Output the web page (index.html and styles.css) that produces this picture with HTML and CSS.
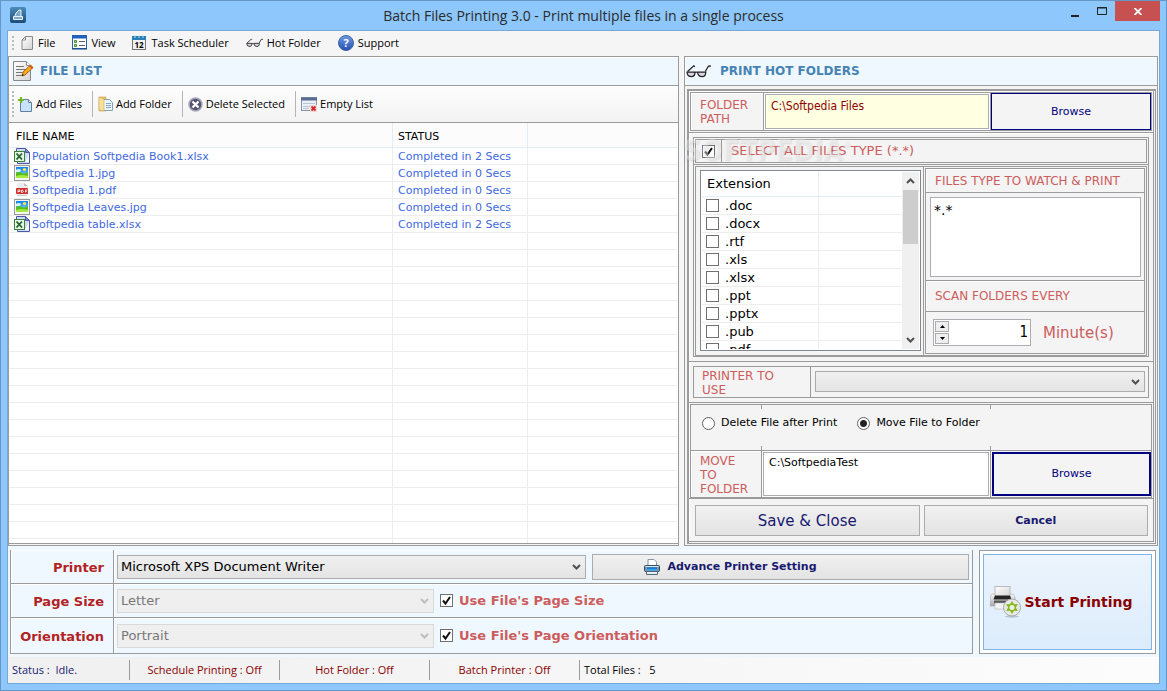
FILE: index.html
```
<!DOCTYPE html>
<html lang="en">
<head>
<meta charset="utf-8">
<title>Batch Files Printing 3.0</title>
<link rel="stylesheet" href="styles.css">
</head>
<body>
<svg class="defs" aria-hidden="true">
  <defs>
    <linearGradient id="sheet" x1="0" y1="0" x2="1" y2="1"><stop offset="0" stop-color="#fff"/><stop offset="1" stop-color="#d4d4d4"/></linearGradient>
    <linearGradient id="blue" x1="0" y1="0" x2="0" y2="1"><stop offset="0" stop-color="#6f9be6"/><stop offset="1" stop-color="#2450b0"/></linearGradient>
    <linearGradient id="app" x1="0" y1="0" x2="0" y2="1"><stop offset="0" stop-color="#4a8dbd"/><stop offset="1" stop-color="#1d4c78"/></linearGradient>
    <linearGradient id="sky" x1="0" y1="0" x2="0" y2="1"><stop offset="0" stop-color="#1582e8"/><stop offset="1" stop-color="#8ddcff"/></linearGradient>
    <linearGradient id="grey" x1="0" y1="0" x2="0" y2="1"><stop offset="0" stop-color="#fafafa"/><stop offset="1" stop-color="#a8a8a8"/></linearGradient>
    <symbol id="xls" viewBox="0 0 16 16">
      <path d="M2.500 3V.5h9l4 4v11h-12V14" fill="#cfdcf8" stroke="#5256a8"/><path d="M11.500 .5v4h4z" fill="#7f8ddb" stroke="#5256a8"/>
      <path d="M11 14h4V6z" fill="#f4f8ff"/><rect x=".5" y="3.500" width="10" height="10" fill="#e9f5e6" stroke="#398236"/>
      <path d="M2.500 5.500l5.500 6M8 5.500l-5.500 6" stroke="#1d6427" stroke-width="1.800"/>
    </symbol>
    <symbol id="jpg" viewBox="0 0 16 16">
      <rect x=".5" y=".5" width="15" height="15" fill="#f6f6f6" stroke="#999"/><rect x="2" y="2" width="12" height="11" fill="url(#sky)"/>
      <path d="M2 5q3-2 5 0l-1 2H2z" fill="#d6f2ff"/><circle cx="10.500" cy="4.500" r="1.600" fill="#ffe94c"/><path d="M2 8q4-2 6 0t6-1v6H2z" fill="#57bd19"/><path d="M2 11q6-2 12 0v2H2z" fill="#a5ea3e"/>
    </symbol>
    <symbol id="pdf" viewBox="0 0 16 16">
      <path d="M3 1h7l4 3v9H3z" fill="#ececec"/><path d="M10 1v3h4z" fill="#bdbdbd"/><rect x="2" y="6" width="12" height="6" rx="1" fill="#d22b28"/>
      <path d="M4 10.500V8h2v1.500H4M7.500 8v2.500q2 0 2-1.200T7.500 8M11.500 10.500V8h2M11.500 9.300h1.500" fill="none" stroke="#fff" stroke-width=".8"/><path d="M3 13.500h10" stroke="#c9c9c9"/>
    </symbol>
    <symbol id="glasses" viewBox="0 0 24 14">
      <path d="M1.500 7l6-5.500 1 1M18.500 7l3-5 1.500-.5.500 1" fill="none" stroke="#222" stroke-width="1.200"/>
      <path d="M1 7.500h7.500q.5 4-3 4.500Q1 12 1 7.500zM11 7.500h8q0 4.500-3.500 4.500-4 0-4.500-4.500z" fill="#dcd4e6" stroke="#222" stroke-width="1.200"/><path d="M8.500 8q1-1 2.500 0" fill="none" stroke="#222"/>
    </symbol>
  </defs>
</svg>

<header class="titlebar">
  <svg class="app-icon" viewBox="0 0 16 16"><rect width="16" height="16" rx="2" fill="url(#app)"/><path d="M5 9l1-3 3-3h2v6M3.500 9.500h9v3h-9z" fill="#7fa9ca" stroke="#e8f1f8"/></svg>
  <h1>Batch Files Printing 3.0 - Print multiple files in a single process</h1>
  <div class="controls">
    <button aria-label="Minimize"><svg width="8" height="12"><path d="M0 11h8" stroke="#222" stroke-width="2"/></svg></button>
    <button aria-label="Maximize"><svg width="10" height="8"><path d="M.5.5h9v7h-9zM0 1h10" fill="none" stroke="#222"/></svg></button>
    <button class="close" aria-label="Close"><svg width="8" height="7"><path d="M.5 0l7 7m0-7l-7 7" stroke="#fff" stroke-width="1.800"/></svg></button>
  </div>
</header>

<main class="client">
  <nav class="menubar">
    <span class="grip"></span>
    <button><svg width="13" height="16"><path d="M4.500 1.500h7v13H1V5z" fill="url(#sheet)" stroke="#888"/><path d="M1 5h3.500V1.500" fill="none" stroke="#888"/></svg>File</button>
    <button><svg width="15" height="15"><rect x=".5" y=".5" width="14" height="13" fill="#fff" stroke="#2465ad"/><path d="M0 2h15" stroke="#1c61bd" stroke-width="3"/><path d="M0 14h15" stroke="#143e80"/><path d="M2.500 5.500h2v2h-2zM2.500 9.500h2v2h-2z" fill="#b9dd8f" stroke="#4c8b2b"/><path d="M7 6.500h6M7 10.500h6" stroke="#567"/></svg>View</button>
    <button><svg width="15" height="16"><rect x=".5" y="1.500" width="13" height="13" fill="#f2f2f2" stroke="#777"/><path d="M0 1h14v4H0z" fill="#287fb9"/><path d="M3 0v3M7 0v3M11 0v3" stroke="#b9dcf0"/><text x="7" y="13" class="icon-date">12</text></svg>Task Scheduler</button>
    <button><svg width="17" height="10"><use href="#glasses"/></svg>Hot Folder</button>
    <button><svg width="16" height="16"><circle cx="8" cy="8" r="7.500" fill="url(#blue)" stroke="#4063a7"/><text x="8" y="12" class="icon-help">?</text></svg>Support</button>
  </nav>

  <div class="workspace">
    <section class="panel files">
      <h2 class="panel-title">
        <svg width="21" height="22"><path d="M.5 1.500h13l4 4v15H.5z" fill="url(#sheet)" stroke="#888"/><path d="M13.500 1.500v4h4" fill="#fff" stroke="#888"/><path d="M3 6.500h8M3 9.500h11M3 12.500h8M3 15.500h6" stroke="#777"/><path d="M9 16l1-4 7.500-7L20 7.500 12 15z" fill="#f5a91b" stroke="#ad6712"/><path d="M9 16l.5-2 1.500 1z" fill="#222"/><path d="M17 6l2.500 2.500" stroke="#d6443c" stroke-width="1.500"/></svg>
        FILE LIST</h2>
      <div class="toolbar">
        <span class="grip tall"></span>
        <button><svg width="15" height="15"><path d="M2.500 2.500h8l3 3v9h-11z" fill="#c9e3fb" stroke="#5f7fa3"/><path d="M10.500 2.500v3h3" fill="#fff" stroke="#5f7fa3"/><path d="M3 0v6M0 3h6" stroke="#78b52a" stroke-width="2.200"/></svg>Add Files</button>
        <button><svg width="15" height="16"><path d="M1 1h7v14H1z" fill="#e5c466" stroke="#bd953c" stroke-width=".5"/><path d="M5.500 3.500h6l3 3v8h-9z" fill="#edf5f9" stroke="#86a4b5"/><path d="M8 7.500h5M8 9.500h5M8 11.500h5" stroke="#7ba9ca"/><path d="M1 1l5 2v12l-5-1z" fill="#f7df97" stroke="#c7a04b" stroke-width=".5"/></svg>Add Folder</button>
        <button><svg width="15" height="15"><circle cx="7.500" cy="7.500" r="6.500" fill="#565475" stroke="#aaa9b9" stroke-width="1.500"/><path d="M4.500 4.500l6 6m0-6l-6 6" stroke="#fff" stroke-width="2.200"/></svg>Delete Selected</button>
        <button><svg width="16" height="15"><rect x=".5" y=".5" width="15" height="13" fill="#eaf0f6" stroke="#8792a2"/><path d="M0 2h16" stroke="#5a6d90" stroke-width="3"/><path d="M2 6.500h12M2 9.500h7M2 11.500h6" stroke="#bac5d2"/><rect x="9" y="8" width="7" height="7" fill="#f1dada"/><path d="M10.500 9.500l4 4m0-4l-4 4" stroke="#d22929" stroke-width="1.800"/></svg>Empty List</button>
      </div>
      <div class="file-list">
        <table>
          <colgroup><col class="c-name"><col class="c-status"><col></colgroup>
          <thead><tr><th>FILE NAME</th><th>STATUS</th><th></th></tr></thead>
          <tbody>
            <tr><td><svg><use href="#xls"/></svg>Population Softpedia Book1.xlsx</td><td>Completed in 2 Secs</td><td></td></tr>
            <tr><td><svg><use href="#jpg"/></svg>Softpedia 1.jpg</td><td>Completed in 0 Secs</td><td></td></tr>
            <tr><td><svg><use href="#pdf"/></svg>Softpedia 1.pdf</td><td>Completed in 0 Secs</td><td></td></tr>
            <tr><td><svg><use href="#jpg"/></svg>Softpedia Leaves.jpg</td><td>Completed in 0 Secs</td><td></td></tr>
            <tr><td><svg><use href="#xls"/></svg>Softpedia table.xlsx</td><td>Completed in 2 Secs</td><td></td></tr>
          </tbody>
        </table>
        <div class="blank-rows"><i></i><i></i><i></i></div>
      </div>
    </section>

    <section class="panel hot">
      <h2 class="panel-title"><svg width="25" height="15"><use href="#glasses"/></svg>PRINT HOT FOLDERS</h2>
      <div class="hot-frame"><div class="hot-body">
        <div class="folder-row">
          <label for="path">FOLDER PATH</label>
          <div class="cell"><textarea id="path" class="yellow">C:\Softpedia Files</textarea></div>
          <button class="browse">Browse</button>
        </div>

        <div class="types">
          <div class="all-row">
            <span class="cell"><input type="checkbox" id="all" checked></span><label for="all">SELECT ALL FILES TYPE (*.*)</label>
            <span class="watermark" aria-hidden="true">SOFTPEDIA<sup>®</sup></span>
          </div>
          <div class="types-grid">
            <div class="ext-cell"><div class="ext-list">
              <div class="ext-rows">
                <div class="ext-head">Extension</div>
                <label><input type="checkbox">.doc</label>
                <label><input type="checkbox">.docx</label>
                <label><input type="checkbox">.rtf</label>
                <label><input type="checkbox">.xls</label>
                <label><input type="checkbox">.xlsx</label>
                <label><input type="checkbox">.ppt</label>
                <label><input type="checkbox">.pptx</label>
                <label><input type="checkbox">.pub</label>
                <label><input type="checkbox">.pdf</label>
              </div>
              <div class="scrollbar">
                <svg width="9" height="6"><path d="M1 5l3.500-3.500L8 5" class="chev"/></svg>
                <span class="thumb"></span>
                <svg width="9" height="6"><path d="M1 1l3.500 3.500L8 1" class="chev"/></svg>
              </div>
            </div></div>
            <div class="watch">
              <label for="watch">FILES TYPE TO WATCH &amp; PRINT</label>
              <div class="watch-box"><textarea id="watch">*.*</textarea></div>
              <label for="scan" class="scan">SCAN FOLDERS EVERY</label>
              <div class="minutes">
                <div class="spinner">
                  <span class="spin-buttons"><button aria-label="Increase"><svg width="5" height="3"><path d="M0 3L2.500 0 5 3z"/></svg></button><button aria-label="Decrease"><svg width="5" height="3"><path d="M0 0h5L2.500 3z"/></svg></button></span>
                  <input id="scan" type="text" value="1">
                </div>
                <span>Minute(s)</span>
              </div>
            </div>
          </div>
        </div>

        <div class="printer-row">
          <label for="use">PRINTER TO USE</label>
          <div class="cell"><select id="use"><option></option></select></div>
        </div>

        <div class="move">
          <div class="after">
            <label><input type="radio" name="after">Delete File after Print</label>
            <label><input type="radio" name="after" checked>Move File to Folder</label>
          </div>
          <div class="move-row">
            <label for="move">MOVE TO FOLDER</label>
            <div class="cell"><textarea id="move">C:\SoftpediaTest</textarea></div>
            <button class="browse thick">Browse</button>
          </div>
        </div>

        <div class="actions"><button class="save">Save &amp; Close</button><button class="cancel">Cancel</button></div>
      </div></div>
    </section>
  </div>

  <section class="setup">
    <div class="form">
      <label class="name" for="printer">Printer</label>
      <div class="field wide"><select id="printer"><option>Microsoft XPS Document Writer</option></select>
        <button class="advance"><svg width="16" height="16"><path d="M4 7V.5h6L12.500 3v4" fill="#fff" stroke="#8a96a5"/><rect x=".5" y="6.500" width="15" height="6" rx="1" fill="#7f93a8" stroke="#34485e"/><path d="M1.500 7.500h13" stroke="#e4edf4"/><path d="M3 8.500h10v3H3z" fill="#29a3f3"/><path d="M3 9h10" stroke="#0862ba"/><path d="M2.500 12.500h11v3h-11z" fill="#e9eef3" stroke="#56677a"/></svg>Advance Printer Setting</button></div>
      <label class="name" for="size">Page Size</label>
      <div class="field"><select id="size" disabled><option>Letter</option></select><label><input type="checkbox" checked>Use File's Page Size</label></div>
      <label class="name" for="orient">Orientation</label>
      <div class="field"><select id="orient" disabled><option>Portrait</option></select><label><input type="checkbox" checked>Use File's Page Orientation</label></div>
    </div>
    <div class="start-frame"><button class="start">
      <svg width="32" height="32"><path d="M2 8h21l2 3v9H0v-9z" fill="url(#grey)" stroke="#aaa" stroke-width=".6"/><rect x="5" y=".5" width="15" height="10" fill="url(#sheet)" stroke="#bbb"/><path d="M5 9.500h15l1.500 4h-18z" fill="#242424"/><path d="M4 14.500h17v3H4z" fill="#555"/><path d="M5 17h15v6H5z" fill="#f3f3f3" stroke="#bbb" stroke-width=".6"/><ellipse cx="22" cy="30.500" rx="7" ry="1.200" fill="#b8c3cf"/><circle cx="22" cy="21.500" r="8.500" fill="#e8e8e8" stroke="#aaa"/><path d="M22 15l2 3.200 3.800-.2-1.900 3.500 1.900 3.500-3.800-.2-2 3.200-2-3.200-3.800.2 1.900-3.500-1.900-3.500 3.800.2z" fill="#85ba18"/><circle cx="22" cy="21.500" r="2.500" fill="#eee"/></svg>
      Start Printing</button></div>
  </section>

  <footer class="status">
    <span class="idle">Status :&nbsp; Idle.</span><span>Schedule Printing : Off</span><span>Hot Folder : Off</span><span>Batch Printer : Off</span><span class="total">Total Files :&nbsp;&nbsp; 5</span>
  </footer>
</main>
</body>
</html>
```
FILE: styles.css
```
:root {
  --line: #9b9b9b;
  --face: #f4f4f4;
  --alice: #f0f8ff;
  --verdana: "DejaVu Sans", Verdana, sans-serif;
  --tahoma: "DejaVu Sans Condensed", Tahoma, "DejaVu Sans", sans-serif;
  --segoe: "Open Sans", "Segoe UI", sans-serif;
}
* { box-sizing: border-box; }
body {
  margin: 0;
  height: 100vh;
  display: flex;
  flex-direction: column;
  padding: 0 6px 6px;
  border: 1px solid #6696c4;
  background: #8dc7fb;
  font: 11px/14px var(--verdana);
  color: #000;
}
button, input, select, textarea { font: inherit; color: inherit; margin: 0; }
button { padding: 0; cursor: default; }
textarea { resize: none; display: block; width: 100%; height: 100%; border: 1px solid #abadb3; outline: none; }
svg { flex: none; }
.defs { position: absolute; width: 0; height: 0; }

.titlebar { display: grid; grid-template-columns: 130px 1fr 130px; height: 29px; }
.app-icon { width: 16px; height: 16px; margin: 6px 0 0 3px; }
h1 { margin: 0; font: 14px/30px var(--segoe); text-align: center; color: #2b2b2b; white-space: nowrap; }
.controls { display: flex; justify-content: flex-end; align-items: flex-start; }
.controls button { width: 27px; height: 20px; border: 0; background: none; display: flex; align-items: center; justify-content: center; }
.controls .close { width: 45px; background: #c75050; }

.client { flex: 1; min-height: 0; display: flex; flex-direction: column; border: 1px solid #76a8d6; background: var(--alice); }

.menubar, .toolbar { display: flex; align-items: center; font: 11px/16px var(--segoe); }
.menubar { height: 25px; padding: 0 0 2px 4px; gap: 17px; background: #f5f5f5; }
.menubar button, .toolbar button { display: flex; align-items: center; gap: 4px; border: 0; background: none; white-space: nowrap; }
.grip { width: 2px; height: 14px; margin-right: -10px; background: repeating-linear-gradient(#bbb 0 2px, transparent 2px 4px); }
.grip.tall { height: 26px; margin-right: 3px; }
.icon-date { font: bold 8px var(--segoe); text-anchor: middle; }
.icon-help { font: bold 11px var(--segoe); text-anchor: middle; fill: #fff; }

.workspace { flex: 1; min-height: 0; display: grid; grid-template-columns: minmax(0, 671fr) minmax(0, 474fr); gap: 5px; background: #f6f6f6; padding-right: 1px; }
.panel { min-height: 0; display: flex; flex-direction: column; border: 1px solid var(--line); background: var(--face); }
.panel-title { margin: 0; flex: none; height: 29px; display: flex; align-items: center; gap: 6px; padding-left: 4px; border-bottom: 1px solid var(--line); box-shadow: inset 1px 1px #fff; background: var(--alice); color: #4682b4; font: bold 12px/16px var(--verdana); }
.hot .panel-title { padding-left: 1px; gap: 9px; }

.toolbar { height: 37px; flex: none; padding-left: 3px; border-bottom: 1px solid var(--line); background: linear-gradient(#fdfdfd, #f3f3f3); }
.toolbar button { height: 26px; padding: 0 10px 0 5px; gap: 3px; }
.toolbar button + button { border-left: 1px solid #b5b5b5; }
.toolbar button:nth-of-type(1) { padding-left: 1px; }

.file-list { flex: 1; min-height: 0; display: flex; flex-direction: column; background: #fff; border-bottom: 1px solid var(--line); margin-bottom: 1px; overflow: hidden; }
.file-list table { width: 100%; table-layout: fixed; border-collapse: separate; border-spacing: 0; }
.c-name { width: 384px; }
.c-status { width: 135px; }
th { height: 25px; padding: 3px 5px 0; border: solid #e1edf8; border-width: 0 1px 1px 0; background: #fcfcfc; text-align: left; font-weight: normal; }
th:first-child { padding-left: 7px; }
td { height: 17px; padding: 2px 5px 0; border: solid #ededed; border-width: 0 1px 1px 0; color: #4169e1; line-height: 14px; white-space: nowrap; }
td:last-child, th:last-child { border-right: 0; }
td svg { width: 16px; height: 16px; margin: -2px 2px 0 0; vertical-align: top; }
.blank-rows { flex: 1; display: grid; grid-template-columns: 384px 135px 1fr; background: repeating-linear-gradient(transparent 0 16px, #ededed 16px 17px); }
.blank-rows i + i { border-left: 1px solid #ededed; margin-left: -1px; }

.hot-frame { flex: 1; margin: 3px 1px 2px 2px; padding: 0 1px 1px 0; border: solid var(--line); border-width: 2px 1px 1px 2px; box-shadow: inset 1px 1px #fff; }
.hot-body { height: 100%; display: flex; flex-direction: column; border-right: 1px solid var(--line); border-bottom: 1px solid var(--line); }
.hot label { color: #cd5c5c; font-size: 12px; }
.folder-row, .move-row { display: grid; grid-template-columns: 73px minmax(0, 1fr) 160px; grid-template-rows: minmax(0, 1fr); }
.folder-row { height: 39px; margin: 1px; border: 1px solid var(--line); }
.folder-row label, .move-row label { padding: 5px 9px 0; border-right: 1px solid var(--line); box-shadow: inset 1px 1px #fff; }
.folder-row .cell, .move-row .cell { padding: 1px; border-right: 1px solid var(--line); background: #fff; }
.folder-row textarea { padding: 3px 5px; background: #ffffe1; color: #8b0000; font: 12px/16px var(--tahoma); }
.browse { border: 1px solid #000080; background: var(--face); color: #000080; }
.browse.thick { border-width: 2px; }

.types { border-top: 1px solid var(--line); padding: 4px 4px 4px; box-shadow: inset 0 1px #fff; }
.all-row { position: relative; display: grid; grid-template-columns: 27px 1fr; height: 28px; padding: 1px; border: 1px solid var(--line); }
.all-row::before { content: ""; position: absolute; inset: 1px; border: 1px solid var(--line); pointer-events: none; }
.all-row .cell { display: flex; align-items: center; justify-content: center; border-right: 1px solid var(--line); }
.all-row label { align-self: center; padding-left: 9px; font-size: 13px; }
.watermark { position: absolute; left: -11px; top: -3px; font: bold 28px/32px var(--tahoma); color: rgba(255, 255, 255, .35); text-shadow: 1px 1px 2px rgba(120, 120, 120, .2); pointer-events: none; }
.watermark sup { font-size: 9px; line-height: 9px; vertical-align: 12px; }
.types-grid { display: grid; grid-template-columns: 228px 1fr; height: 192px; padding: 1px; border: 1px solid var(--line); border-top: 0; }
.ext-cell { padding: 3px 2px 4px 4px; border: solid var(--line); border-width: 1px 0 1px 1px; }
.ext-list { height: 181px; display: flex; overflow: hidden; border: 1px solid #828790; background: #fff; padding: 1px; }
.ext-rows { flex: 1; overflow: hidden; background: linear-gradient(#ededed, #ededed) 116px 0 / 1px 100% no-repeat; font-size: 13px; }
.ext-head { height: 25px; padding: 5px; border-bottom: 1px solid #e1edf8; }
.ext-rows label { height: 18px; display: flex; align-items: center; gap: 6px; padding-left: 4px; border-bottom: 1px solid #ededed; color: #000; font-size: 13px; }
.scrollbar { width: 17px; display: flex; flex-direction: column; align-items: center; justify-content: space-between; padding: 6px 1px; background: #f0f0f0; }
.thumb { width: 15px; height: 54px; margin-bottom: 88px; background: #cdcdcd; }
.chev { fill: none; stroke: #505050; stroke-width: 2; }

input[type="checkbox"] { appearance: none; flex: none; width: 13px; height: 13px; border: 1px solid #707070; background: #fff; }
input[type="checkbox"]:checked { background: #fff url("data:image/svg+xml,%3Csvg xmlns='http://www.w3.org/2000/svg' viewBox='0 0 11 11'%3E%3Cpath d='M2 5.500l2.500 3L9 2' fill='none' stroke='%23111' stroke-width='2'/%3E%3C/svg%3E") center / 11px 11px no-repeat; }
input[type="radio"] { appearance: none; flex: none; width: 13px; height: 13px; border: 1px solid #606060; border-radius: 50%; background: #fff; }
input[type="radio"]:checked { background: radial-gradient(circle, #222 0 3px, #fff 4px); }

.watch { margin: 2px; display: grid; grid-template-rows: 24px minmax(0, 1fr) 32px 41px; border: 1px solid var(--line); box-shadow: 0 0 0 1px var(--face), 0 0 0 2px var(--line); }
.watch > label { display: flex; align-items: center; padding-left: 9px; border-bottom: 1px solid var(--line); box-shadow: inset 1px 1px #fff; }
.watch-box { min-height: 0; padding: 4px 3px 3px 4px; }
.watch textarea { padding: 4px 3px; font: 14px/16px var(--verdana); }
.watch > .scan { border-top: 1px solid var(--line); }
.minutes { display: flex; align-items: center; gap: 12px; padding-left: 7px; color: #cd5c5c; font-size: 15px; }
.spinner { display: flex; width: 98px; height: 27px; padding: 1px; border: 1px solid #abadb3; background: #fff; color: #000; }
.spinner input { width: 100%; min-width: 0; border: 0; padding: 0 1px 2px; text-align: right; background: none; outline: none; font: 15px/20px var(--tahoma); }
.spin-buttons { display: flex; flex: none; flex-direction: column; width: 14px; gap: 1px; }
.spin-buttons button { flex: 1; display: flex; align-items: center; justify-content: center; border: 1px solid #acacac; background: #eee; }

select { appearance: none; border: 1px solid #acacac; border-radius: 0; padding: 0 3px; color: #000; opacity: 1; background: url("data:image/svg+xml,%3Csvg xmlns='http://www.w3.org/2000/svg' viewBox='0 0 9 6'%3E%3Cpath d='M1 1l3.500 3.500L8 1' fill='none' stroke='%23505050' stroke-width='2'/%3E%3C/svg%3E") right 4px center / 9px 6px no-repeat, linear-gradient(#f0f0f0, #e4e4e4); }
select:disabled { border-color: #d9d9d9; color: #777; background: url("data:image/svg+xml,%3Csvg xmlns='http://www.w3.org/2000/svg' viewBox='0 0 9 6'%3E%3Cpath d='M1 1l3.500 3.500L8 1' fill='none' stroke='%23bfbfbf' stroke-width='2'/%3E%3C/svg%3E") right 4px center / 9px 6px no-repeat, #efefef; }

.printer-row { padding: 4px; border-top: 1px solid var(--line); display: grid; grid-template-columns: 118px 1fr; height: 41px; }
.printer-row > * { border: 1px solid var(--line); }
.printer-row label { padding: 2px 24px 0 8px; }
.printer-row .cell { border-left: 0; padding: 4px 3px 4px 4px; }
.printer-row select { display: block; width: 100%; height: 21px; }

.move { border: solid var(--line); border-width: 1px 0; padding: 1px 1px 0; }
.after { height: 46px; display: flex; align-items: flex-start; gap: 20px; padding: 11px 11px 0; border: 1px solid var(--line); border-bottom: 0;
  background: linear-gradient(var(--line), var(--line)) 70px 0 / 1px 4px no-repeat, linear-gradient(var(--line), var(--line)) 70px 100% / 1px 4px no-repeat, linear-gradient(var(--line), var(--line)) right 160px top 0 / 1px 4px no-repeat, linear-gradient(var(--line), var(--line)) right 160px bottom 0 / 1px 4px no-repeat; }
.after label { display: flex; align-items: center; gap: 6px; color: #000; font-size: 11px; }
.move-row { height: 48px; grid-template-columns: 71px minmax(0, 1fr) 160px; border: 1px solid var(--line); }
.move-row label { padding-top: 3px; }
.move-row textarea { padding: 3px 5px; }
.move-row .browse { margin: 1px 0 1px 1px; }

.actions { flex: 1; display: grid; grid-template-columns: 1fr 1fr; gap: 4px; padding: 6px 5px 5px 6px; min-height: 42px; }
.actions button, .advance { border: 1px solid #acacac; background: linear-gradient(#f1f1f1, #e3e3e3); color: #191970; }
.actions .save { font-size: 15px; }
.actions .cancel { font-weight: bold; }

.setup { display: grid; grid-template-columns: minmax(0, 1fr) 177px; gap: 6px; padding: 4px 3px 3px 2px; background: var(--alice); }
.form { display: grid; grid-template-columns: 103px minmax(0, 1fr); grid-template-rows: 34px 34px 36px; border: solid var(--line); border-width: 0 1px 0 1px; }
.form > * { border-bottom: 1px solid var(--line); box-shadow: inset 1px 1px #fff; }
.form > .name { display: flex; align-items: center; justify-content: flex-end; padding: 2px 9px 0 0; border-right: 1px solid var(--line); color: #b22222; font: bold 13px/16px var(--verdana); }
.field { display: grid; grid-template-columns: minmax(0, 317fr) minmax(0, 529fr); gap: 6px; align-items: center; padding: 0 3px; }
.field.wide { grid-template-columns: minmax(0, 469fr) minmax(0, 377fr); }
.field select { height: 24px; font-size: 13px; width: 100%; }
.field label { display: flex; align-items: center; gap: 6px; color: #cd5c5c; font: bold 13px/16px var(--verdana); }
.advance { height: 26px; display: flex; align-items: center; justify-content: center; gap: 7px; font-weight: bold; padding: 0 100px 0 0; white-space: nowrap; }
.start-frame { padding: 3px; border: 1px solid var(--line); background: #fff; display: grid; }
.start { display: flex; align-items: center; justify-content: center; gap: 2px; padding-right: 12px; border: 1px solid #7eb4ea; background: linear-gradient(#ecf4fc, #dcecfc); color: #8b0000; font: bold 14px/18px var(--verdana); white-space: nowrap; }

.status { height: 26px; flex: none; display: flex; align-items: center; background: linear-gradient(90deg, #f0f0f0, #fcfcfc); font: 11px/20px var(--segoe); color: #8b0000; }
.status span { width: 150px; text-align: center; border-left: 1px solid var(--line); }
.status .idle { width: 121px; padding-left: 4px; text-align: left; border: 0; color: #191970; }
.status .total { padding-left: 4px; text-align: left; color: #000; }
```
